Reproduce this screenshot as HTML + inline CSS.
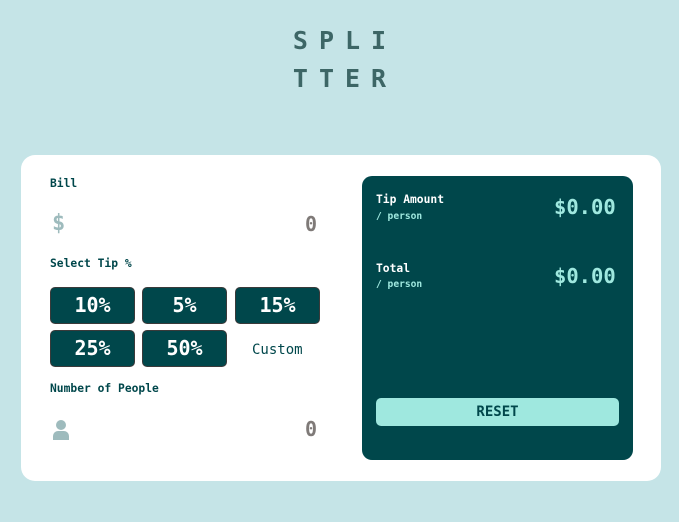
<!DOCTYPE html>
<html><head><style>
body{margin:0;width:679px;height:522px;background:#c5e4e7;font-family:"DejaVu Sans Mono","Liberation Mono",monospace;position:relative;overflow:hidden}
.t{position:absolute;left:0;width:679px;text-align:center;font-family:"DejaVu Sans Mono",monospace;font-weight:bold;font-size:25px;color:#3d6666;letter-spacing:11px;padding-left:11px;box-sizing:border-box}
.card{position:absolute;left:21px;top:155px;width:640px;height:326px;background:#fff;border-radius:14px}
.a{position:absolute}
.lbl{font-size:11.3px;font-weight:bold;color:#00474b}
.btn{position:absolute;width:85px;height:37px;background:#00474b;border:1px solid #3a3a3a;border-radius:5px;box-sizing:border-box;color:#fff;font-weight:bold;font-size:20px;text-align:center;line-height:35px}
.zero{font-size:20px;font-weight:bold;color:#7f7a78}
.panel{position:absolute;left:362px;top:176px;width:271px;height:284px;background:#00474b;border-radius:10px}
.w{color:#fff;font-size:11.3px;font-weight:bold}
.s{color:#9fe8df;font-size:9.6px;font-weight:bold}
.big{color:#9fe8df;font-size:20.5px;font-weight:bold}
</style></head><body>
<div class="t" style="top:26px">SPLI</div>
<div class="t" style="top:64px">TTER</div>
<div class="card"></div>
<div class="a lbl" style="left:50px;top:177px">Bill</div>
<div class="a" style="left:52px;top:211px;font-size:22px;font-weight:bold;color:#9ebbbd">$</div>
<div class="a zero" style="left:305px;top:212px">0</div>
<div class="a lbl" style="left:50px;top:257px">Select Tip %</div>
<div class="btn" style="left:50px;top:287px">10%</div>
<div class="btn" style="left:142px;top:287px">5%</div>
<div class="btn" style="left:235px;top:287px">15%</div>
<div class="btn" style="left:50px;top:330px">25%</div>
<div class="btn" style="left:142px;top:330px">50%</div>
<div class="a" style="left:252px;top:342px;font-size:14px;color:#00474b">Custom</div>
<div class="a lbl" style="left:50px;top:382px">Number of People</div>
<svg class="a" style="left:52px;top:419px" width="18" height="22" viewBox="0 0 18 22"><circle cx="9" cy="6" r="5" fill="#9ebbbd"/><path d="M1 21v-4a5 5 0 0 1 5-5h6a5 5 0 0 1 5 5v4z" fill="#9ebbbd"/></svg>
<div class="a zero" style="left:305px;top:417px">0</div>
<div class="panel"></div>
<div class="a w" style="left:376px;top:193px">Tip Amount</div>
<div class="a s" style="left:376px;top:211px">/ person</div>
<div class="a big" style="left:554px;top:195px">$0.00</div>
<div class="a w" style="left:376px;top:262px">Total</div>
<div class="a s" style="left:376px;top:279px">/ person</div>
<div class="a big" style="left:554px;top:264px">$0.00</div>
<div class="a" style="left:376px;top:398px;width:243px;height:28px;background:#9fe8df;border-radius:5px;text-align:center;line-height:28px;font-weight:bold;font-size:14px;color:#00474b">RESET</div>
</body></html>
